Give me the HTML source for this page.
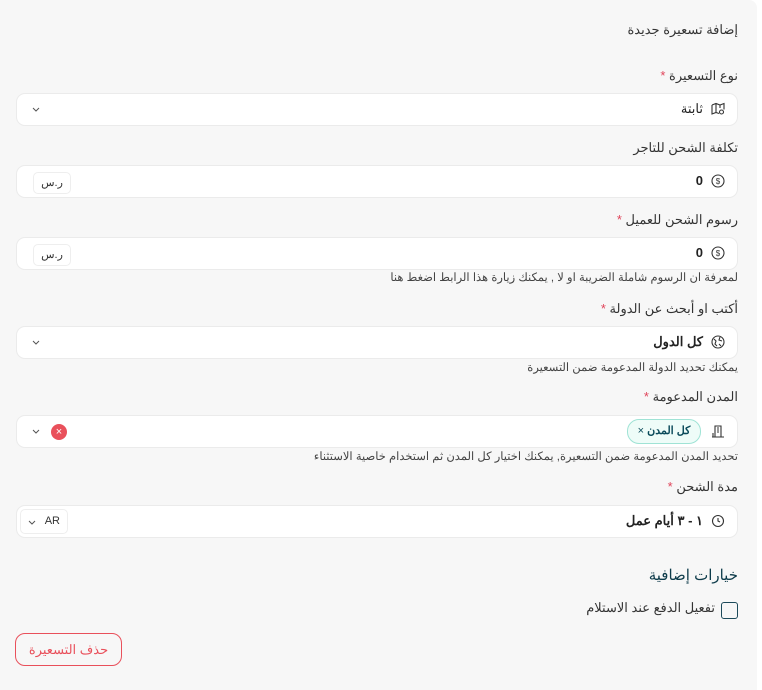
<!DOCTYPE html>
<html dir="rtl"><head><meta charset="utf-8"><style>
body{margin:0;width:762px;height:685px;background:#fff;font-family:"Liberation Sans","Noto Sans CJK SC",sans-serif;overflow:hidden;position:relative}
.card{position:absolute;left:0;top:0;width:757px;height:690px;background:#f7f7f7;border-top-right-radius:8px}
.t{position:absolute;right:19px;font-size:13px;color:#333;white-space:nowrap}
.s{color:#e0445a}
.h{position:absolute;right:19px;font-size:11.5px;color:#444;white-space:nowrap}
.in{position:absolute;left:16px;width:720px;height:31px;background:#fff;border:1px solid #ebebeb;border-radius:9px}
.v{position:absolute;right:34px;top:7px;font-size:13px;color:#222;font-weight:bold}
.ic{position:absolute;right:12px;top:8px;width:14px;height:14px}
.cur{position:absolute;left:16px;top:6px;width:36px;height:20px;border:1px solid #eee;border-radius:5px;font-size:11px;color:#333;text-align:center;line-height:20px}
.chev{position:absolute;left:14px;top:10px;width:10px;height:10px}
</style></head><body><div class="card">
<div class="t" style="top:22px">إضافة تسعيرة جديدة</div>

<div class="t" style="top:68px">نوع التسعيرة <span class="s">*</span></div>
<div class="in" style="top:93px">
<svg class="ic" viewBox="0 0 14 14" fill="none" stroke="#333" stroke-width="1.1"><path d="M1 3l4-1.5 4 1.5 4-1.5v6M1 3v9l4-1.5 3 1M5 1.5v9M9 3v3"/><circle cx="10.5" cy="10" r="2"/></svg>
<div class="v" style="font-weight:normal">ثابتة</div>
<svg class="chev" viewBox="0 0 10 10" fill="none" stroke="#555"><path d="M2 4l3 3 3-3"/></svg></div>

<div class="t" style="top:140px">تكلفة الشحن للتاجر</div>
<div class="in" style="top:165px">
<svg class="ic" viewBox="0 0 14 14" fill="none" stroke="#333" stroke-width="1.1"><circle cx="7" cy="7" r="6"/><text x="7" y="10" font-size="8" text-anchor="middle" fill="#333" stroke="none">$</text></svg>
<div class="v">0</div><div class="cur">ر.س</div></div>

<div class="t" style="top:212px">رسوم الشحن للعميل <span class="s">*</span></div>
<div class="in" style="top:237px">
<svg class="ic" viewBox="0 0 14 14" fill="none" stroke="#333" stroke-width="1.1"><circle cx="7" cy="7" r="6"/><text x="7" y="10" font-size="8" text-anchor="middle" fill="#333" stroke="none">$</text></svg>
<div class="v">0</div><div class="cur">ر.س</div></div>
<div class="h" style="top:270px">لمعرفة ان الرسوم شاملة الضريبة او لا , يمكنك زيارة هذا الرابط اضغط هنا</div>

<div class="t" style="top:301px">أكتب او أبحث عن الدولة <span class="s">*</span></div>
<div class="in" style="top:326px">
<svg class="ic" viewBox="0 0 14 14" fill="none" stroke="#333" stroke-width="1.1"><circle cx="7" cy="7" r="6"/><path d="M3 4l2 2-1 3 2 2M9 2l-1 3 3 1M8 9l2 2"/></svg>
<div class="v">كل الدول</div>
<svg class="chev" viewBox="0 0 10 10" fill="none" stroke="#555"><path d="M2 4l3 3 3-3"/></svg></div>
<div class="h" style="top:360px">يمكنك تحديد الدولة المدعومة ضمن التسعيرة</div>

<div class="t" style="top:389px">المدن المدعومة <span class="s">*</span></div>
<div class="in" style="top:415px">
<svg class="ic" viewBox="0 0 14 14" fill="none" stroke="#333" stroke-width="1.1"><path d="M1 13h12M4 13V2h6v11M6 4h2M6 6h2M6 8h2M2 13V9"/></svg>
<div style="position:absolute;right:36px;top:3px;height:23px;width:72px;border:1px solid #9fe3d5;background:#eefcf8;border-radius:12px;font-size:11px;color:#0a4a5a;line-height:23px;text-align:center;font-weight:bold">كل المدن <span style="font-weight:normal">×</span></div>
<div style="position:absolute;left:34px;top:8px;width:16px;height:16px;border-radius:50%;background:#e9505b;color:#fff;font-size:11px;line-height:16px;text-align:center">×</div>
<svg class="chev" viewBox="0 0 10 10" fill="none" stroke="#555"><path d="M2 4l3 3 3-3"/></svg></div>
<div class="h" style="top:449px">تحديد المدن المدعومة ضمن التسعيرة, يمكنك اختيار كل المدن ثم استخدام خاصية الاستثناء</div>

<div class="t" style="top:479px">مدة الشحن <span class="s">*</span></div>
<div class="in" style="top:505px">
<svg class="ic" viewBox="0 0 14 14" fill="none" stroke="#333" stroke-width="1.1"><circle cx="7" cy="7" r="5.5"/><path d="M7 4v3l2 1"/></svg>
<div class="v">١ - ٣ أيام عمل</div>
<div style="position:absolute;left:3px;top:3px;width:46px;height:23px;border:1px solid #eee;border-radius:5px;font-size:11px;color:#333;line-height:23px"><span style="position:absolute;right:7px">AR</span><svg style="position:absolute;left:6px;top:7px" width="10" height="10" viewBox="0 0 10 10" fill="none" stroke="#555"><path d="M2 4l3 3 3-3"/></svg></div></div>

<div class="t" style="top:566px;font-size:15px;color:#0d3b4a">خيارات إضافية</div>
<div style="position:absolute;right:19px;top:602px;width:15px;height:15px;border:1.5px solid #1d4a5a;border-radius:3px"></div>
<div class="t" style="top:600px;right:42px">تفعيل الدفع عند الاستلام</div>
<div style="position:absolute;left:15px;top:633px;width:105px;height:31px;border:1px solid #e9505b;border-radius:10px;color:#e9505b;font-size:13px;text-align:center;line-height:31px">حذف التسعيرة</div>
</div></body></html>
